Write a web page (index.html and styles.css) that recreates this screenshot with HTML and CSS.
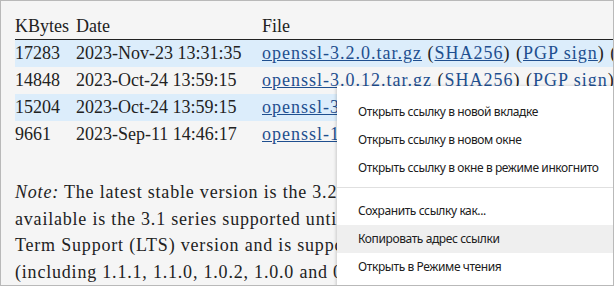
FILE: index.html
```html
<!DOCTYPE html>
<html lang="en">
<head>
  <meta charset="UTF-8" />
  <title>OpenSSL downloads</title>
  <link rel="stylesheet" href="styles.css">
</head>
<body>
  <div class="frame">
    <div class="content">
      <table class="files">
        <tr class="head">
          <th class="size">KBytes</th>
          <th class="date">Date</th>
          <th class="file">File</th>
        </tr>
        <tr class="alt">
          <td>17283</td>
          <td>2023-Nov-23 13:31:35</td>
          <td class="file"><a href="#">openssl-3.2.0.tar.gz</a> (<a href="#">SHA256</a>) (<a href="#">PGP sign</a>) (<a href="#">SHA1</a>)</td>
        </tr>
        <tr>
          <td>14848</td>
          <td>2023-Oct-24 13:59:15</td>
          <td class="file"><a href="#">openssl-3.0.12.tar.gz</a> (<a href="#">SHA256</a>) (<a href="#">PGP sign</a>) (<a href="#">SHA1</a>)</td>
        </tr>
        <tr class="alt">
          <td>15204</td>
          <td>2023-Oct-24 13:59:15</td>
          <td class="file"><a href="#">openssl-3.1.4.tar.gz</a> (<a href="#">SHA256</a>) (<a href="#">PGP sign</a>) (<a href="#">SHA1</a>)</td>
        </tr>
        <tr>
          <td>9661</td>
          <td>2023-Sep-11 14:46:17</td>
          <td class="file"><a href="#">openssl-1.1.1w.tar.gz</a> (<a href="#">SHA256</a>) (<a href="#">PGP sign</a>) (<a href="#">SHA1</a>)</td>
        </tr>
      </table>

      <p class="note">
        <em>Note:</em> The latest stable version is the 3.2 series supported until 23rd November 2025. Also<br>
        available is the 3.1 series supported until 14th March 2025, and the 3.0 series which is a Long<br>
        Term Support (LTS) version and is supported until 7th September 2026. All older versions<br>
        (including 1.1.1, 1.1.0, 1.0.2, 1.0.0 and 0.9.8) are now out of support and should not be used.
      </p>
    </div>

    <ul class="context-menu">
      <li>Открыть ссылку в новой вкладке</li>
      <li>Открыть ссылку в новом окне</li>
      <li>Открыть ссылку в окне в режиме инкогнито</li>
      <li class="sep"></li>
      <li>Сохранить ссылку как...</li>
      <li class="hover">Копировать адрес ссылки</li>
      <li>Открыть в Режиме чтения</li>
    </ul>
  </div>
</body>
</html>
```

FILE: styles.css
```css
body {
  margin: 0;
  background: #ffffff;
}
.frame {
  position: relative;
  width: 614px;
  height: 286px;
  box-sizing: border-box;
  border: 1px solid #b9b9b9;
  background-color: #f5f5f5;
  overflow: hidden;
}
.content {
  padding: 12px 0 0 14px;
  font-family: "Liberation Serif", "Times New Roman", serif;
  font-size: 18px;
  color: #222;
  white-space: nowrap;
}
.files {
  border-collapse: collapse;
  width: 800px;
}
.files th {
  font-weight: normal;
  text-align: left;
  height: 26px;
  line-height: 26px;
  padding: 0;
  border-bottom: 1px solid #222;
}
.files td {
  height: 27px;
  line-height: 27px;
  padding: 0;
}
.files .size {
  width: 61px;
}
.files .date {
  width: 186px;
}
.files td.file {
  letter-spacing: 1px;
}
.files tr.alt td {
  background-color: #dcedfb;
}
.files a {
  color: #1f4f8f;
}
.note {
  margin: 31px 0 0;
  line-height: 26.7px;
  letter-spacing: 0.8px;
}
.context-menu {
  position: absolute;
  left: 336px;
  top: 85px;
  width: 300px;
  height: 220px;
  margin: 0;
  padding: 12px 0 0;
  list-style: none;
  background: #fff;
  box-shadow: -1px 0 3px rgba(0, 0, 0, 0.18);
  font-family: "Noto Sans", "Open Sans", sans-serif;
  font-size: 12px;
  letter-spacing: -0.4px;
  color: #202020;
}
.context-menu li {
  height: 28px;
  line-height: 28px;
  padding-left: 21px;
}
.context-menu li.sep {
  height: 1px;
  margin: 5px 0 9px;
  padding: 0;
  background: #e0e0e0;
}
.context-menu li.hover {
  background: #efefef;
}
```
